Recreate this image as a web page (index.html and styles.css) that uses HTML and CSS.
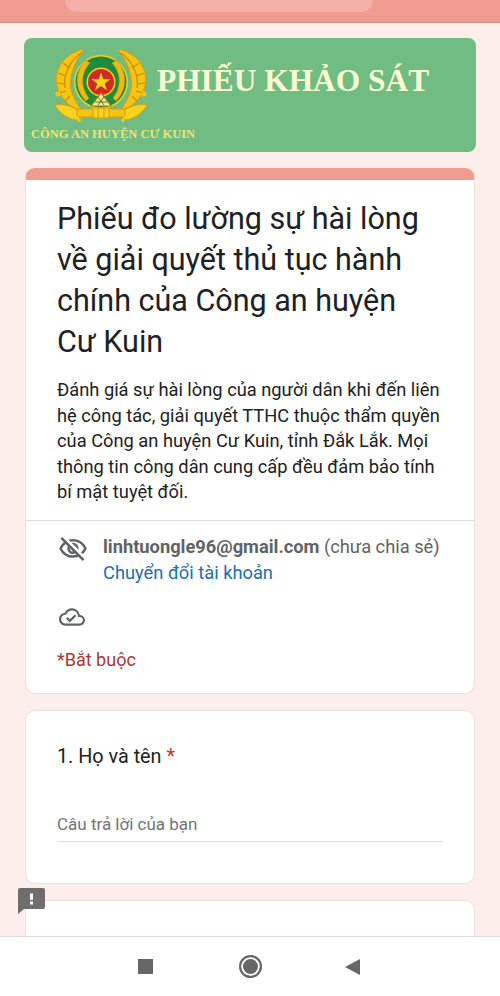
FILE: index.html
```html
<!DOCTYPE html>
<html lang="vi">
<head>
    <meta charset="UTF-8">
    <meta name="viewport" content="width=device-width, initial-scale=1.0">
    <title>Phiếu khảo sát</title>
    <link rel="stylesheet" href="styles.css">
</head>
<body>
    <div class="screen">
        <!-- Browser bar -->
        <div class="topbar"><div class="topbar-pill"></div></div>

        <main class="content">
            <header class="banner">
                <div class="banner-top">
                    <svg class="emblem" width="92" height="74" viewBox="0 0 92 74">
                        <!-- wheat sheaves -->
                        <path d="M29 0 C16 3 5 11 2 24 C-1 37 5 49 16 57 L27 62 C19 51 14 41 16 30 C17 18 23 9 29 0 Z" fill="#f6c514" stroke="#e09a05" stroke-width="1"/>
                        <path d="M63 0 C76 3 87 11 90 24 C93 37 87 49 76 57 L65 62 C73 51 78 41 76 30 C75 18 69 9 63 0 Z" fill="#f6c514" stroke="#e09a05" stroke-width="1"/>
                        <path d="M26 4 C15 12 8 25 10 39 M8 14 L15 19 M3 24 L11 27 M2 34 L10 35 M4 44 L11 42 M10 52 L15 47 M66 4 C77 12 84 25 82 39 M84 14 L77 19 M89 24 L81 27 M90 34 L82 35 M88 44 L81 42 M82 52 L77 47" fill="none" stroke="#c98a04" stroke-width="1.1"/>
                        <path d="M0 56 C9 54 20 58 28 65 L22 71 C13 70 4 64 0 56 Z" fill="#fbd21e" stroke="#e09a05" stroke-width=".8"/>
                        <path d="M92 56 C83 54 72 58 64 65 L70 71 C79 70 88 64 92 56 Z" fill="#fbd21e" stroke="#e09a05" stroke-width=".8"/>
                        <circle cx="3" cy="45" r="2.6" fill="#f6c514"/>
                        <circle cx="89" cy="45" r="2.6" fill="#f6c514"/>
                        <!-- roundel -->
                        <circle cx="46" cy="33" r="27" fill="#f7d117"/>
                        <circle cx="46" cy="33" r="25.5" fill="#1e8c3a"/>
                        <path d="M30 11 C20 23 19 40 31 52 L34 49 C26 39 25 25 35 14 Z M62 11 C72 23 73 40 61 52 L58 49 C66 39 67 25 57 14 Z" fill="#e9bb1a" stroke="#b98f0a" stroke-width=".6"/>
                        <circle cx="46" cy="33" r="14.5" fill="#f7d117"/>
                        <circle cx="46" cy="33" r="13" fill="#cf2a27"/>
                        <polygon points="46,23.5 48.3,30.3 55.5,30.3 49.7,34.5 51.9,41.3 46,37.1 40.1,41.3 42.3,34.5 36.5,30.3 43.7,30.3" fill="#fbd21e"/>
                        <!-- gear and base -->
                        <path d="M36 57 L46 44 L56 57 Z" fill="#efe9a8" stroke="#a88206" stroke-width="1.2"/>
                        <path d="M40 53 L52 53 M43 48 L49 56 M49 48 L43 56" stroke="#8a6d05"/>
                        <path d="M24 60 H68 C71 62 71 66 68 68 H24 C21 66 21 62 24 60 Z" fill="#f6c514" stroke="#e09a05"/>
                        <path d="M38 59 H54 V69 H38 Z M43 59 V69 M49 59 V69" fill="#fbd21e" stroke="#e09a05"/>
                        <circle cx="24" cy="71" r="2" fill="#f6c514"/>
                        <circle cx="68" cy="71" r="2" fill="#f6c514"/>
                    </svg>
                    <h2 class="banner-title">PHIẾU KHẢO SÁT</h2>
                </div>
                <div class="banner-caption">CÔNG AN HUYỆN CƯ KUIN</div>
            </header>

            <section class="card card-intro">
                <div class="intro-text">
                    <h1>Phiếu đo lường sự hài lòng về giải quyết thủ tục hành chính của Công an huyện Cư Kuin</h1>
                    <p>Đánh giá sự hài lòng của người dân khi đến liên hệ công tác, giải quyết TTHC thuộc thẩm quyền của Công an huyện Cư Kuin, tỉnh Đắk Lắk. Mọi thông tin công dân cung cấp đều đảm bảo tính bí mật tuyệt đối.</p>
                </div>
                <div class="intro-meta">
                    <div class="account">
                        <svg class="icon" width="30" height="30" viewBox="0 0 24 24">
                            <path d="M12 6c3.79 0 7.17 2.13 8.82 5.5-.59 1.22-1.42 2.27-2.41 3.12l1.41 1.41c1.39-1.23 2.49-2.77 3.18-4.53C21.27 7.11 17 4 12 4c-1.27 0-2.49.2-3.64.57l1.65 1.65C10.66 6.09 11.32 6 12 6zm-1.07 1.14L13 9.21c.57.25 1.03.71 1.28 1.28l2.07 2.07c.08-.34.14-.7.14-1.07C16.5 9.01 14.48 7 12 7c-.37 0-.72.05-1.07.14zM2.01 3.87l2.68 2.68C3.06 7.83 1.77 9.53 1 11.5 2.73 15.89 7 19 12 19c1.52 0 2.98-.29 4.32-.82l3.42 3.42 1.41-1.41L3.42 2.45 2.01 3.87zm7.5 7.5l2.61 2.61c-.04.01-.08.02-.12.02-1.38 0-2.5-1.12-2.5-2.5 0-.05.01-.08.01-.13zm-3.4-3.4l1.75 1.75c-.23.55-.36 1.15-.36 1.78 0 2.48 2.02 4.5 4.5 4.5.63 0 1.23-.13 1.77-.36l.98.98c-.88.24-1.8.38-2.75.38-3.79 0-7.17-2.13-8.82-5.5.7-1.43 1.72-2.61 2.93-3.53z" fill="#5f6368"/>
                        </svg>
                        <div class="account-text">
                            <div><b>linhtuongle96@gmail.com</b> (chưa chia sẻ)</div>
                            <a href="#">Chuyển đổi tài khoản</a>
                        </div>
                    </div>
                    <svg class="icon cloud" width="26" height="26" viewBox="0 0 24 24">
                        <path d="M19.35 10.04A7.49 7.49 0 0 0 12 4C9.11 4 6.6 5.64 5.35 8.04A5.994 5.994 0 0 0 0 14c0 3.31 2.69 6 6 6h13c2.76 0 5-2.24 5-5 0-2.64-2.05-4.78-4.65-4.96zM19 18H6c-2.21 0-4-1.79-4-4 0-2.05 1.53-3.76 3.56-3.97l1.07-.11.5-.95A5.469 5.469 0 0 1 12 6c2.62 0 4.88 1.86 5.39 4.43l.3 1.5 1.53.11A2.98 2.98 0 0 1 22 15c0 1.65-1.35 3-3 3zm-9-3.82l-2.09-2.09L6.5 13.5 10 17l6.01-6.01-1.41-1.41z" fill="#5f6368"/>
                    </svg>
                    <div class="required">*Bắt buộc</div>
                </div>
            </section>

            <section class="card card-question">
                <div class="question-title">1. Họ và tên <span class="star">*</span></div>
                <div class="answer">Câu trả lời của bạn</div>
            </section>

            <section class="card card-next"></section>
        </main>

        <!-- Report badge -->
        <svg class="report" width="27" height="27" viewBox="0 0 27 27">
            <path d="M2 0 H25 a2 2 0 0 1 2 2 V19 a2 2 0 0 1 -2 2 H6 L0 26 V2 a2 2 0 0 1 2 -2 Z" fill="#5f5f5f" fill-opacity=".9"/>
            <rect x="12" y="5.5" width="3" height="6.5" fill="#fff"/>
            <rect x="12" y="13.5" width="3" height="3" fill="#fff"/>
        </svg>

        <!-- Android nav -->
        <nav class="navbar">
            <span class="nav-square"></span>
            <span class="nav-circle"></span>
            <span class="nav-back"></span>
        </nav>
    </div>
</body>
</html>
```

FILE: styles.css
```css
* {
    box-sizing: border-box;
}
body {
    margin: 0;
    font-family: Roboto, Arial, sans-serif;
    background-color: #fdeeec;
}
.screen {
    position: relative;
    width: 500px;
    height: 996px;
    display: flex;
    flex-direction: column;
    overflow: hidden;
}

/* Top bar */
.topbar {
    flex: none;
    height: 23px;
    padding: 0 127px 0 65px;
    background-color: #f19c91;
    border-bottom: 1px solid #dd8c82;
}
.topbar-pill {
    height: 12px;
    background-color: #f4b0a8;
    border-radius: 0 0 14px 14px;
}

.content {
    flex: 1;
    min-height: 0;
    overflow: hidden;
    padding: 15px 25px 0;
}

/* Banner */
.banner {
    height: 114px;
    margin: 0 -1px 16px;
    padding: 11px 0 0 7px;
    background-color: #70bc83;
    border-radius: 8px;
}
.banner-top {
    display: flex;
    align-items: flex-start;
    padding-left: 24px;
}
.banner-title {
    margin: 12px 0 0 10px;
    font-family: "Liberation Serif", serif;
    font-size: 31.4px;
    line-height: 40px;
    font-weight: bold;
    color: #fbfbd2;
    white-space: nowrap;
}
.banner-caption {
    margin-top: 4px;
    font-family: "Liberation Serif", serif;
    font-size: 12.5px;
    line-height: 14px;
    font-weight: bold;
    color: #efe27a;
}

/* Cards */
.card {
    background-color: #fff;
    border: 1px solid #eadfde;
    border-radius: 10px;
    margin-bottom: 16px;
}
.card-intro {
    height: 526px;
    border-top: 12px solid #f19c91;
    overflow: hidden;
}
.intro-text {
    padding: 18px 31px 15px;
    border-bottom: 1px solid #dfdcdc;
    height: 341px;
}
.intro-text h1 {
    margin: 0 0 15px;
    padding-right: 12px;
    font-family: Roboto, sans-serif;
    font-size: 30.5px;
    line-height: 41px;
    font-weight: 400;
    color: #202124;
}
.intro-text p {
    margin: 0;
    font-size: 18.3px;
    line-height: 25.5px;
    color: #202124;
}
.intro-meta {
    padding: 13px 31px 0;
}
.account {
    display: flex;
    gap: 15px;
    margin-left: 1px;
}
.icon {
    flex: none;
    display: block;
}
.account-text {
    font-size: 18.3px;
    line-height: 26px;
    color: #5f6368;
    white-space: nowrap;
}
.account-text a {
    color: #1a6fb5;
    text-decoration: none;
}
.cloud {
    margin: 18px 0 0 2px;
}
.required {
    margin-top: 18px;
    font-size: 18px;
    line-height: 24px;
    color: #a83a32;
}

.card-question {
    height: 174px;
    padding: 33px 31px 0;
}
.question-title {
    font-size: 19.8px;
    line-height: 26px;
    color: #202124;
}
.star {
    color: #c5392f;
}
.answer {
    margin-top: 42px;
    padding-bottom: 5px;
    font-size: 17px;
    line-height: 24px;
    color: #70757a;
    border-bottom: 1px solid #dadce0;
}
.card-next {
    height: 120px;
}

/* Report badge sits over the cards */
.report {
    position: absolute;
    left: 18px;
    top: 888px;
}

/* Android nav */
.navbar {
    flex: none;
    height: 60px;
    display: flex;
    align-items: center;
    justify-content: center;
    padding-right: 3px;
    background-color: #fff;
    border-top: 1px solid #e2dcdc;
}
.nav-square {
    width: 15px;
    height: 15px;
    background-color: #666;
}
.nav-circle {
    width: 23px;
    height: 23px;
    margin: 0 83px 0 86px;
    border-radius: 50%;
    background-color: #666;
    border: 2px solid #666;
    box-shadow: inset 0 0 0 2px #fff;
}
.nav-back {
    width: 0;
    height: 0;
    border-top: 8.5px solid transparent;
    border-bottom: 8.5px solid transparent;
    border-right: 15px solid #666;
}
```
